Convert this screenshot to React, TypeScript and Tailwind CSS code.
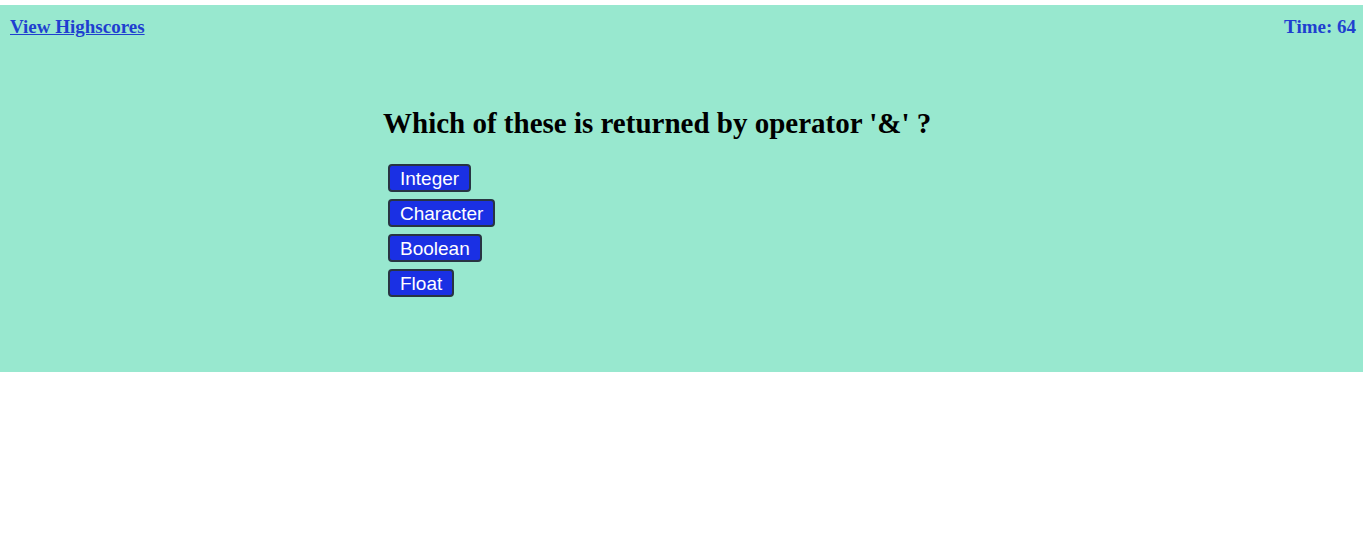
const answers = ["Integer", "Character", "Boolean", "Float"];

export default function App() {
  return (
    <div className="min-h-[559px] bg-white pt-[5px] font-['Liberation_Serif',serif]">
      <div className="h-[367px] bg-[#98e8cf] px-[10px] pt-[10px]">
        <div className="flex items-start justify-between text-[19px] font-bold leading-[24px] text-[#1f3fd0]">
          <a href="#" className="underline">
            View Highscores
          </a>
          <span className="-mr-[3px]">Time: 64</span>
        </div>
        <div className="ml-[373px] mt-[66px]">
          <h2 className="text-[29px] font-bold leading-[36px] text-black">
            Which of these is returned by operator '&amp;' ?
          </h2>
          <div className="mt-[23px] ml-[5px] flex flex-col items-start gap-[7px]">
            {answers.map((a) => (
              <button
                key={a}
                className="h-[28px] rounded-[4px] border-2 border-[#283442] bg-[#1a30e4] px-[10px] font-['Liberation_Sans',sans-serif] text-[19px] leading-none text-white"
              >
                {a}
              </button>
            ))}
          </div>
        </div>
      </div>
    </div>
  );
}
